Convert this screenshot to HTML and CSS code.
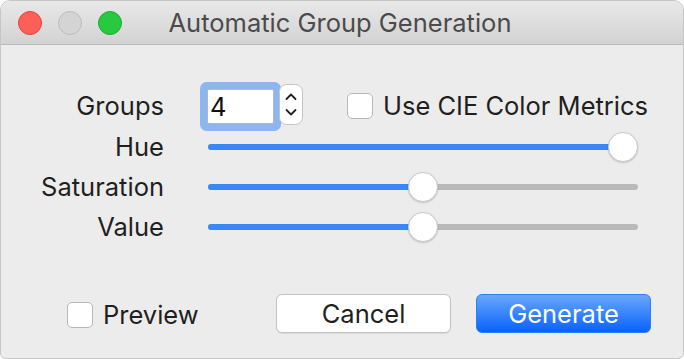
FILE: index.html
```html
<!DOCTYPE html>
<html lang="en">
<head>
  <meta charset="UTF-8">
  <title>Automatic Group Generation</title>
  <link rel="stylesheet" href="styles.css">
</head>
<body>

  <div class="window">
    <div class="titlebar">
      <div class="lights">
        <span class="light close"></span>
        <span class="light min"></span>
        <span class="light zoom"></span>
      </div>
      <div class="title">Automatic Group Generation</div>
    </div>

    <div class="content">
      <div class="form">
        <div class="label">Groups</div>
        <div class="groups-row">
          <div class="number-field">4</div>
          <span class="stepper">
            <svg width="24" height="41" viewBox="0 0 24 41">
              <rect x="0.5" y="0.5" width="23" height="40" rx="7" fill="#fff" stroke="#c4c4c4"/>
              <path d="M7.5 15 L12 10.5 L16.5 15" fill="none" stroke="#222" stroke-width="1.8" stroke-linecap="round" stroke-linejoin="round"/>
              <path d="M7.5 26 L12 30.5 L16.5 26" fill="none" stroke="#222" stroke-width="1.8" stroke-linecap="round" stroke-linejoin="round"/>
            </svg>
          </span>
          <label class="check cie"><span class="box"></span>Use CIE Color Metrics</label>
        </div>

        <div class="label">Hue</div>
        <div class="slider">
          <div class="track"><div class="fill" style="width: calc(100% - 15px)"></div></div>
          <div class="thumb" style="left: calc(100% - 30px)"></div>
        </div>

        <div class="label">Saturation</div>
        <div class="slider">
          <div class="track"><div class="fill" style="width: calc(50% + 0px)"></div></div>
          <div class="thumb" style="left: calc(50% - 15px)"></div>
        </div>

        <div class="label">Value</div>
        <div class="slider">
          <div class="track"><div class="fill" style="width: calc(50% + 0px)"></div></div>
          <div class="thumb" style="left: calc(50% - 15px)"></div>
        </div>
      </div>

      <div class="footer">
        <label class="check preview"><span class="box"></span>Preview</label>
        <div class="buttons">
          <button class="button cancel">Cancel</button>
          <button class="button primary">Generate</button>
        </div>
      </div>
    </div>
  </div>

</body>
</html>
```

FILE: styles.css
```css
body {
  margin: 0;
  background: #ffffff;
  font-family: 'Inter', 'Liberation Sans', sans-serif;
  color: #1f1f1f;
}

.window {
  width: 684px;
  height: 359px;
  box-sizing: border-box;
  border: 1px solid #c6c6c6;
  border-radius: 10px 10px 6px 6px;
  background: #ececec;
  overflow: hidden;
}

.titlebar {
  height: 43px;
  border-bottom: 1px solid #b9b9b9;
  background: linear-gradient(#e9e8e9, #d4d3d4);
  display: grid;
  grid-template-columns: 1fr auto 1fr;
  align-items: center;
}

.lights {
  display: flex;
  gap: 16px;
  padding-left: 17px;
  padding-top: 1px;
}

.light {
  width: 22px;
  height: 22px;
  border-radius: 50%;
  border: 1px solid;
}

.light.close { background: #fe5f57; border-color: #e0443e; }
.light.min { background: #d4d4d4; border-color: #bcbcbc; }
.light.zoom { background: #28c940; border-color: #1dad2b; }

.title {
  font-size: 25.5px;
  color: #4b4b4b;
  margin-left: -4px;
}

.content {
  padding-top: 40px;
}

.form {
  display: grid;
  grid-template-columns: 163px 1fr;
  grid-template-rows: 42px 40px 39px 41px;
  column-gap: 43px;
  align-items: center;
}

.label {
  justify-self: end;
  font-size: 25.5px;
  line-height: 1;
}

.groups-row {
  display: flex;
  align-items: center;
}

.number-field {
  width: 67px;
  height: 35px;
  box-sizing: border-box;
  border: 1px solid #a9b9cf;
  background: #fff;
  border-radius: 2px;
  box-shadow: 0 0 0 7px #8db6f0;
  font-size: 25.5px;
  line-height: 33px;
  padding-left: 2px;
  color: #111;
}

.stepper {
  display: flex;
  margin-left: 5px;
  margin-top: -3px;
}

.check {
  display: flex;
  align-items: center;
  gap: 10px;
  font-size: 25.5px;
}

.check.cie {
  margin-left: 44px;
  margin-top: -1px;
}

.box {
  width: 26px;
  height: 26px;
  box-sizing: border-box;
  background: #fff;
  border: 1px solid #b7b7b7;
  border-radius: 5px;
}

.slider {
  position: relative;
  width: 430px;
  height: 30px;
  margin-left: 1px;
}

.track {
  position: absolute;
  left: 0;
  right: 0;
  top: 12px;
  height: 6px;
  border-radius: 3px;
  background: #b9b9b9;
  overflow: hidden;
}

.fill {
  height: 100%;
  background: #3a87fc;
}

.thumb {
  position: absolute;
  top: 0;
  width: 30px;
  height: 30px;
  box-sizing: border-box;
  border-radius: 50%;
  background: #fff;
  border: 1px solid #c9c9c9;
  box-shadow: 0 1px 2px rgba(0, 0, 0, 0.18);
}

.footer {
  display: flex;
  align-items: center;
  margin-top: 47px;
  padding-left: 66px;
  padding-right: 32px;
}

.check.preview {
  margin-top: 2px;
}

.buttons {
  margin-left: auto;
  display: flex;
  gap: 25px;
}

.button {
  height: 39px;
  width: 175px;
  border-radius: 6px;
  font-family: inherit;
  font-size: 25.5px;
  padding: 0;
}

.button.cancel {
  background: #fff;
  color: #1f1f1f;
  border: 1px solid #c3c3c3;
  box-shadow: 0 1px 1px rgba(0, 0, 0, 0.08);
}

.button.primary {
  background: linear-gradient(#6aa7fc, #0862fb);
  color: #fff;
  border: 1px solid #2f7cf4;
}
```
